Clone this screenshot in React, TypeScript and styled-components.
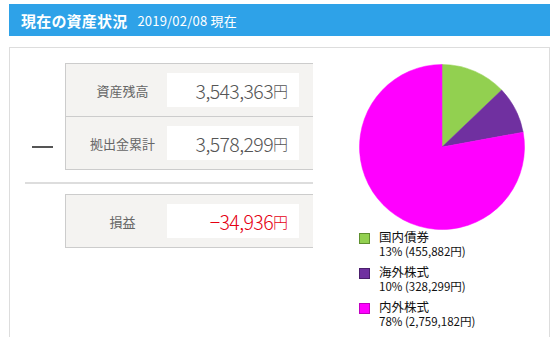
import * as React from "react";
import styled, { createGlobalStyle } from "styled-components";

const GlobalStyle = createGlobalStyle`
    body {
        margin: 0;
        background: #fff;
        font-family: "Noto Sans CJK JP", "Noto Sans", sans-serif;
    }
`;

const Page = styled.div`
    width: 559px;
    height: 337px;
    overflow: hidden;
    padding-top: 4px;
    box-sizing: border-box;
`;

const HeaderBar = styled.div`
    margin: 0 9px;
    height: 32px;
    background-color: #2ea2e8;
    color: white;
    display: flex;
    align-items: center;
    padding-left: 12px;
    gap: 10px;
`;

const Title = styled.h1`
    margin: 0;
    font-size: 15px;
    font-weight: bold;
    letter-spacing: 0.2px;
`;

const DateText = styled.span`
    font-size: 13px;
    letter-spacing: 0.2px;
`;

const Panel = styled.div`
    margin: 11px 9px 0 9px;
    border: 1px solid #ddd;
    height: 320px;
    display: flex;
`;

const LeftCol = styled.div`
    width: 288px;
    padding: 15px 0 0 15px;
    overflow: hidden;
    flex-shrink: 0;
`;

const Group = styled.div`
    display: flex;
`;

const DashCell = styled.div<{ $blank?: boolean }>`
    width: 40px;
    flex-shrink: 0;
    display: flex;
    align-items: flex-end;
    padding-bottom: 22px;
    box-sizing: border-box;
    &::before {
        content: "";
        display: ${(p) => (p.$blank ? "none" : "block")};
        width: 21px;
        height: 2px;
        margin-left: 7px;
        background: #555;
    }
`;

const Table = styled.div`
    flex: 1;
    border: 1px solid #ccc;
    border-right: none;
    background: #f4f3f1;
`;

const Row = styled.div`
    display: flex;
    align-items: center;
    height: 52px;
    & + & {
        border-top: 1px solid #ccc;
    }
`;

const Label = styled.div`
    width: 101px;
    padding-left: 12px;
    box-sizing: border-box;
    text-align: center;
    font-size: 13px;
    color: #666;
`;

const Value = styled.div<{ $negative?: boolean }>`
    width: 132px;
    height: 34px;
    background: white;
    display: flex;
    align-items: center;
    justify-content: flex-end;
    padding-right: 11px;
    box-sizing: border-box;
    font-size: 19.5px;
    font-weight: 300;
    letter-spacing: -0.6px;
    color: ${(p) => (p.$negative ? "#e50012" : "#555")};
`;

const Yen = styled.span`
    font-size: 15px;
    letter-spacing: 0;
`;

const Divider = styled.div`
    height: 2px;
    background: #ddd;
    margin: 12px 0 10px 0;
`;

const RightCol = styled.div`
    flex: 1;
    padding: 16px 0 0 46px;
`;

const PieSvg = styled.svg`
    display: block;
`;

const Legend = styled.ul`
    list-style: none;
    margin: -1px 0 0 0;
    padding: 0;
    display: flex;
    flex-direction: column;
    gap: 5px;
`;

const LegendItem = styled.li`
    display: flex;
    gap: 9px;
    align-items: flex-start;
`;

const Swatch = styled.span<{ $fill: string; $edge: string }>`
    width: 9px;
    height: 9px;
    margin-top: 4px;
    background: ${(p) => p.$fill};
    border: 1px solid ${(p) => p.$edge};
    flex-shrink: 0;
`;

const LegendText = styled.div`
    font-size: 12.5px;
    line-height: 15px;
    color: #111;
`;

const LegendName = styled.div`
    height: 15px;
`;

const LegendSub = styled.div`
    height: 15px;
    font-size: 11.5px;
    line-height: 15px;
`;

const slices = [
    { name: "国内債券", pct: "13%", amount: 455882, fill: "#92d050", edge: "#5f8f2f" },
    { name: "海外株式", pct: "10%", amount: 328299, fill: "#7030a0", edge: "#4a1f6c" },
    { name: "内外株式", pct: "78%", amount: 2759182, fill: "#ff00ff", edge: "#c000c0" },
];

function PieChart() {
    const total = slices.reduce((s, x) => s + x.amount, 0);
    const cx = 83, cy = 83, r = 82.5;
    let start = 0;
    return (
        <PieSvg width="166" height="166" viewBox="0 0 166 166">
            {slices.map((s) => {
                const a0 = (start / total) * Math.PI * 2;
                start += s.amount;
                const a1 = (start / total) * Math.PI * 2;
                const x0 = cx + r * Math.sin(a0), y0 = cy - r * Math.cos(a0);
                const x1 = cx + r * Math.sin(a1), y1 = cy - r * Math.cos(a1);
                const large = a1 - a0 > Math.PI ? 1 : 0;
                return (
                    <path
                        key={s.name}
                        d={`M${cx},${cy} L${x0},${y0} A${r},${r} 0 ${large} 1 ${x1},${y1} Z`}
                        fill={s.fill}
                        stroke={s.fill}
                        strokeWidth="0.5"
                    />
                );
            })}
        </PieSvg>
    );
}

export default function App() {
    return (
        <Page>
            <GlobalStyle />
            <HeaderBar>
                <Title>現在の資産状況</Title>
                <DateText>2019/02/08 現在</DateText>
            </HeaderBar>
            <Panel>
                <LeftCol>
                    <Group>
                        <DashCell />
                        <Table>
                            <Row>
                                <Label>資産残高</Label>
                                <Value>3,543,363<Yen>円</Yen></Value>
                            </Row>
                            <Row>
                                <Label>拠出金累計</Label>
                                <Value>3,578,299<Yen>円</Yen></Value>
                            </Row>
                        </Table>
                    </Group>
                    <Divider />
                    <Group>
                        <DashCell $blank />
                        <Table>
                            <Row>
                                <Label>損益</Label>
                                <Value $negative>−34,936<Yen>円</Yen></Value>
                            </Row>
                        </Table>
                    </Group>
                </LeftCol>
                <RightCol>
                    <PieChart />
                    <Legend>
                        {slices.map((s) => (
                            <LegendItem key={s.name}>
                                <Swatch $fill={s.fill} $edge={s.edge} />
                                <LegendText>
                                    <LegendName>{s.name}</LegendName>
                                    <LegendSub>
                                        {s.pct} ({s.amount.toLocaleString("en-US")}円)
                                    </LegendSub>
                                </LegendText>
                            </LegendItem>
                        ))}
                    </Legend>
                </RightCol>
            </Panel>
        </Page>
    );
}
